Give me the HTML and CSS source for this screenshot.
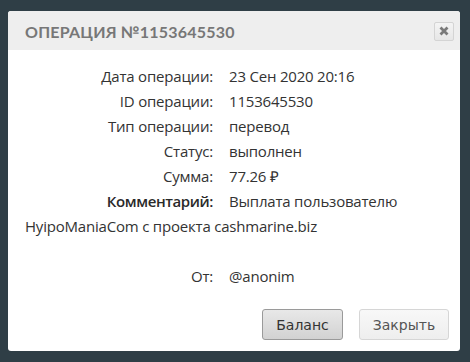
FILE: index.html
```html
<!DOCTYPE html>
<html>
<head>
<meta charset="utf-8">
<link rel="stylesheet" href="styles.css">
</head>
<body>
<div class="dialog">
  <div class="header">
    <div class="title">Операция №1153645530</div>
    <button class="close" aria-label="close">
      <svg width="10" height="10" viewBox="0 0 10 10"><path d="M1.5 1.5 L8.5 8.5 M8.5 1.5 L1.5 8.5" stroke="#7a7a7a" stroke-width="2.8" stroke-linecap="butt"/></svg>
    </button>
  </div>
  <div class="content">
    <div class="row"><span class="label">Дата операции:</span>23 Сен 2020 20:16</div>
    <div class="row"><span class="label">ID операции:</span>1153645530</div>
    <div class="row"><span class="label">Тип операции:</span>перевод</div>
    <div class="row"><span class="label">Статус:</span>выполнен</div>
    <div class="row"><span class="label">Сумма:</span>77.26 ₽</div>
    <div class="row"><span class="label strong">Комментарий:</span>Выплата пользователю</div>
    <div class="row">HyipoManiaCom с проекта cashmarine.biz</div>
    <div class="row spaced"><span class="label">От:</span>@anonim</div>
  </div>
  <div class="footer">
    <button class="btn btn-primary">Баланс</button>
    <button class="btn btn-light">Закрыть</button>
  </div>
</div>
</body>
</html>
```
FILE: styles.css
```css
html, body {
  margin: 0;
  padding: 0;
}
body {
  background: #2f3e46;
  width: 470px;
  height: 362px;
  padding: 11px 10px 0 8px;
  box-sizing: border-box;
}
.dialog {
  width: 452px;
  height: 340px;
  background: #fff;
  border-radius: 3px;
  overflow: hidden;
  display: flex;
  flex-direction: column;
}
.header {
  height: 39px;
  background: #eeeeee;
  display: flex;
  align-items: center;
  justify-content: space-between;
  padding: 0 6px 0 17px;
}
.title {
  font-family: "Lato", sans-serif;
  font-weight: 700;
  font-size: 16px;
  letter-spacing: 0.2px;
  color: #777;
  text-transform: uppercase;
  margin-top: 2px;
}
.close {
  width: 20px;
  height: 19px;
  padding: 0;
  margin-top: 1px;
  border: 1px solid #d4d4d4;
  border-radius: 2px;
  background: linear-gradient(#f4f4f4, #e6e6e6);
  display: flex;
  align-items: center;
  justify-content: center;
}
.content {
  padding: 14px 17px 0 17px;
  font-family: "Open Sans", sans-serif;
  font-size: 15px;
  letter-spacing: -0.2px;
  line-height: 25px;
  color: #333;
  flex: 1;
}
.label {
  display: inline-block;
  width: 188px;
  text-align: right;
  margin-right: 16px;
}
.strong {
  font-weight: 600;
  letter-spacing: -0.4px;
  color: #2a2a2a;
}
.spaced {
  margin-top: 25px;
}
.footer {
  display: flex;
  justify-content: flex-end;
  gap: 16px;
  padding: 0 11px 11px 0;
}
.btn {
  font-family: "DejaVu Sans", sans-serif;
  font-size: 14px;
  height: 31px;
  border-radius: 3px;
  padding: 0;
}
.btn-primary {
  width: 81px;
  color: #333;
  border: 1px solid #9a9a9a;
  background: linear-gradient(#e8e8e8, #d2d2d2);
}
.btn-light {
  width: 90px;
  color: #555;
  border: 1px solid #d6d6d6;
  background: linear-gradient(#f8f8f8, #eeeeee);
}
```
